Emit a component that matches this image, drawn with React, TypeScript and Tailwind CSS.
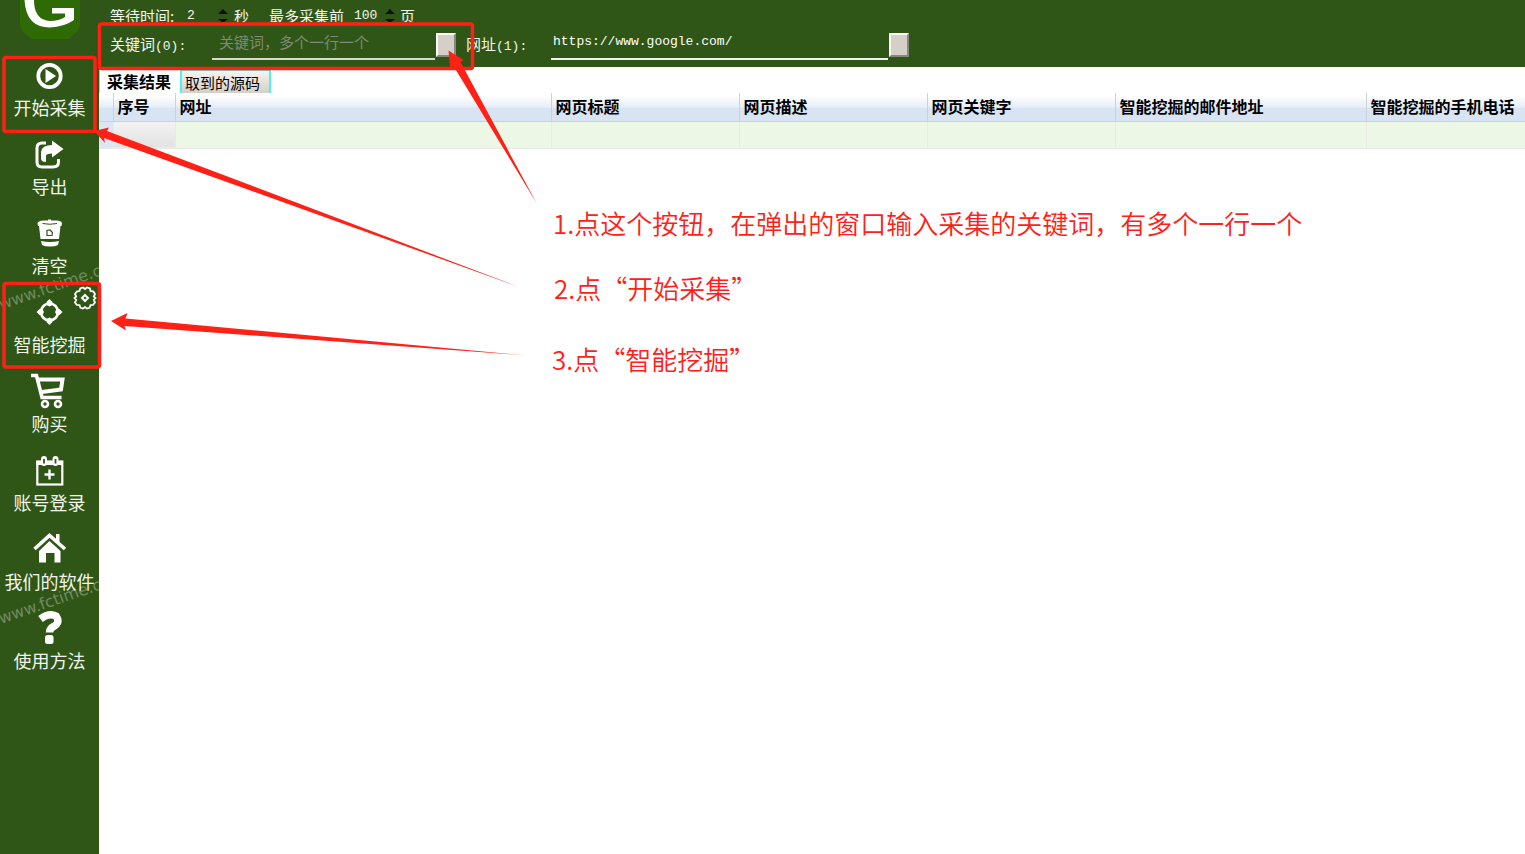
import React from "react";

type Item = { label: string; icon: React.ReactNode };

const navItems: Item[] = [
  {
    label: "开始采集",
    icon: (
      <>
        <circle cx="17.500" cy="19" r="11.200" fill="none" stroke="white" strokeWidth="3.800" />
        <path d="M13.500 12 L24 19 L13.500 26 Z" fill="white" />
      </>
    ),
  },
  {
    label: "导出",
    icon: (
      <>
        <path d="M14 7 H10 Q5 7 5 12 V26 Q5 31 10 31 H21 Q26.500 31 26.500 26 V23" fill="none" stroke="white" strokeWidth="3" />
        <path d="M20 4.500 L31.500 13 L20 21.500 V17.500 Q15 17.500 14 19.500 V26 Q9.500 26 9 23 V16 Q10 9 20 9 Z" fill="white" />
      </>
    ),
  },
  {
    label: "清空",
    icon: (
      <>
        <path d="M5.500 8 Q7 5.500 11 5.500 H16 V4.500 H19 V5.500 H25 Q29 5.500 30 8 L29.500 11 H28.500 L27 24 H8.500 L7 11 H6 Z" fill="white" />
        <path d="M10.500 8.500 Q18 10 25 8.500" fill="none" stroke="#2f5616" strokeWidth="1" />
        <path d="M9 26 Q18 28 27 26 L26 30 Q23 31.500 18 31.500 Q13 31.500 10 30 Z" fill="white" />
        <path d="M15 15.500 V20.500 H20 L20.500 17.500 L18 15 Z" fill="none" stroke="#2f5616" strokeWidth="1.200" />
      </>
    ),
  },
  {
    label: "智能挖掘",
    icon: (
      <>
        <circle cx="17.500" cy="18" r="8.500" fill="none" stroke="white" strokeWidth="2.600" />
        <path
          d="M17.500 5 L20.500 8 V11 L17.500 12.500 L14.500 11 V8 Z M17.500 31 L20.500 28 V25 L17.500 23.500 L14.500 25 V28 Z M4.500 18 L7.500 15 H10.500 L12 18 L10.500 21 H7.500 Z M30.500 18 L27.500 15 H24.500 L23 18 L24.500 21 H27.500 Z"
          fill="white"
        />
      </>
    ),
  },
  {
    label: "购买",
    icon: (
      <>
        <path d="M-1 2.500 H4.500 L10 24.500 H29.500" fill="none" stroke="white" strokeWidth="3.600" />
        <path d="M5 6.500 H30.500 L29 16.500 L10 19" fill="none" stroke="white" strokeWidth="4" />
        <circle cx="13" cy="31" r="3" fill="none" stroke="white" strokeWidth="2.600" />
        <circle cx="26" cy="31" r="3" fill="none" stroke="white" strokeWidth="2.600" />
      </>
    ),
  },
  {
    label: "账号登录",
    icon: (
      <>
        <rect x="5.300" y="9.500" width="25" height="23" fill="none" stroke="white" strokeWidth="2.200" />
        <path d="M4.500 9 H31 V13 H4.500 Z" fill="white" />
        <path d="M12 7 V11 M23.500 7 V11" stroke="white" strokeWidth="6" strokeLinecap="round" />
        <path d="M12 7 V11.500 M23.500 7 V11.500" stroke="#2f5616" strokeWidth="1.800" />
        <path d="M17.500 17.500 V27.500 M12.500 22.500 H22.500" stroke="white" strokeWidth="2.400" />
      </>
    ),
  },
  {
    label: "我们的软件",
    icon: (
      <>
        <path d="M2.500 18 L17.500 4.500 L33 18" fill="none" stroke="white" strokeWidth="3.600" />
        <path d="M24 3 H27.500 V13 L24 10 Z" fill="white" />
        <path d="M17.500 10 L28.500 20 V31.500 H22.500 V22 H14 V31.500 H7 V20 Z" fill="white" />
      </>
    ),
  },
  {
    label: "使用方法",
    icon: (
      <>
        <path d="M8.500 9 Q17 2.500 24 6 Q28.500 12 22.500 16 Q17.500 18 17.500 22.500" fill="none" stroke="white" strokeWidth="7.500" />
        <rect x="13" y="25" width="8.500" height="9" rx="2.500" fill="white" />
      </>
    ),
  },
];

const columns = [
  { title: "", width: "w-[14px]" },
  { title: "序号", width: "w-[62px]" },
  { title: "网址", width: "w-[376px]" },
  { title: "网页标题", width: "w-[188px]" },
  { title: "网页描述", width: "w-[188px]" },
  { title: "网页关键字", width: "w-[188px]" },
  { title: "智能挖掘的邮件地址", width: "w-[251px]" },
  { title: "智能挖掘的手机电话", width: "" },
];

function Logo() {
  return (
    <svg className="mx-auto block h-10 w-[60px]" viewBox="0 0 60 40" aria-label="G">
      <path d="M0 0 H60 V26 L57 32 L48 39 H12 L3 32 L0 26 Z" fill="#2f6b05" />
      <path d="M4.500 0 Q6 27.500 30 27.500 Q44 27 54 20 V8 H32 V13.500 H45 V17 Q39 21 30 21 Q14 20 14 0 Z" fill="white" />
    </svg>
  );
}

function Gear() {
  return (
    <svg viewBox="0 0 24 24" className="h-6 w-6" fill="none" stroke="white">
      <path
        d="M10 1.500 L12 3 L14 1.500 L17 2.500 L17.500 5 L20.500 5.500 L22 8 L20.800 10.500 L22.500 12 L20.800 14 L22 16.500 L20 19 L17.500 19.200 L16.500 21.800 L14 22.500 L12 21 L10 22.500 L7.500 21.800 L6.500 19.200 L3.800 19 L2 16.500 L3.200 14 L1.500 12 L3.200 10.500 L2 8 L3.800 5.500 L6.500 5 L7.200 2.500 Z"
        strokeWidth="1.800"
      />
      <path d="M12 9 L15 12 L12 15 L9 12 Z" strokeWidth="2" />
    </svg>
  );
}

function Sidebar() {
  return (
    <aside className="relative w-[99px] shrink-0 overflow-hidden bg-[#2f5616]">
      <div className="h-14">
        <Logo />
      </div>
      <nav>
        {navItems.map((item) => (
          <div key={item.label} className="relative h-[79px]">
            <button className="flex w-full flex-col items-center whitespace-nowrap pt-px text-[18px] leading-7 text-[#f1f5ec]">
              <svg viewBox="0 0 36 36" className="h-9 w-9 overflow-visible">
                {item.icon}
              </svg>
              <span>{item.label}</span>
            </button>
            {item.label === "智能挖掘" && (
              <button aria-label="设置" className="absolute right-[2px] top-[-7px]">
                <Gear />
              </button>
            )}
          </div>
        ))}
      </nav>
      <svg
        viewBox="0 0 99 400"
        className="pointer-events-none absolute left-0 top-[250px] h-[400px] w-[99px]"
        fill="white"
        fillOpacity="0.32"
        fontFamily="DejaVu Sans, sans-serif"
        fontSize="16"
      >
        <text transform="translate(1 60) rotate(-19)">www.fctime.c</text>
        <text transform="translate(1 374) rotate(-19)">www.fctime.c</text>
      </svg>
    </aside>
  );
}

function Spinner({ label, value, width }: { label: string; value: string; width: string }) {
  return (
    <span className="flex items-center">
      <input aria-label={label} defaultValue={value} className={"bg-transparent font-['Liberation_Mono',monospace] text-[13px] outline-none " + width} />
      <svg viewBox="0 0 10 14" className="h-[14px] w-[10px]" fill="#0b1206">
        <path d="M0 5 L5 0 L10 5 Z M0 10 H10 L5 14 Z" />
      </svg>
    </span>
  );
}

function PickButton({ label }: { label: string }) {
  return (
    <button
      aria-label={label}
      className="h-6 w-5 border-2 border-b-[#8a877f] border-l-[#fbfaf7] border-r-[#8a877f] border-t-[#fbfaf7] bg-[#d4d0c8]"
    />
  );
}

function Toolbar() {
  return (
    <header className="h-[67px] bg-[#2f5616] text-[15px] text-[#f4f7f0]">
      <div className="flex h-[22px] items-start overflow-hidden pl-[11px]">
        <div className="flex h-8 items-center leading-8">
          <span className="w-[77px]">等待时间:</span>
          <Spinner label="等待时间" value="2" width="w-[31px]" />
          <span className="w-[41px] pl-[6px]">秒</span>
          <span className="w-[85px]">最多采集前</span>
          <Spinner label="最多采集页数" value="100" width="w-[31px]" />
          <span className="pl-[5px]">页</span>
        </div>
      </div>
      <div className="flex h-[45px] items-center pl-[11px]">
        <label htmlFor="keywords" className="w-[102px]">
          关键词<span className="font-['Liberation_Mono',monospace] text-[13px]">(0):</span>
        </label>
        <input
          id="keywords"
          placeholder="关键词，多个一行一个"
          className="h-[30px] w-[223px] border-b-2 border-[#d5dccf] bg-transparent pl-[7px] pb-1 outline-none placeholder:text-[#7f8a78]"
        />
        <span className="w-px" />
        <PickButton label="编辑关键词" />
        <label htmlFor="url" className="w-[95px] pl-[10px]">
          网址<span className="font-['Liberation_Mono',monospace] text-[13px]">(1):</span>
        </label>
        <input
          id="url"
          defaultValue="https://www.google.com/"
          className="h-[30px] w-[337px] border-b-2 border-[#f0f3ed] bg-transparent pl-[2px] pb-1 font-['Liberation_Mono',monospace] text-[13px] text-white outline-none"
        />
        <span className="w-px" />
        <PickButton label="编辑网址" />
      </div>
    </header>
  );
}

function Tabs() {
  return (
    <div role="tablist" className="flex h-[26px] items-end border-l border-[#4ff0f0] text-black">
      <button role="tab" aria-selected="true" className="h-6 w-20 pl-[7px] text-left text-base leading-6 font-bold">
        采集结果
      </button>
      <button
        role="tab"
        aria-selected="false"
        className="h-[23px] w-[91px] whitespace-nowrap border-x-2 border-t border-[#4ff0f0] bg-linear-to-b from-[#f6f4f1] to-[#d4d0c8] pl-[3px] text-left text-[15px] leading-[21px]"
      >
        取到的源码
      </button>
    </div>
  );
}

function ResultTable() {
  return (
    <table className="w-full table-fixed border-collapse text-base text-black">
      <thead>
        <tr className="h-[28px] bg-linear-to-b from-white from-10% via-[#e6eef8] via-50% to-[#d8e4f3] to-55%">
          {columns.map((c, i) => (
            <th key={i} className={"overflow-hidden whitespace-nowrap border-b border-l border-[#cdd0d4] p-0 pb-[2px] pl-1 text-left leading-6 first:border-l-0 " + c.width}>
              {c.title}
            </th>
          ))}
        </tr>
      </thead>
      <tbody>
        <tr className="h-[27px]">
          {columns.map((c, i) => (
            <td
              key={i}
              className={
                "border-b border-l border-[#ebe9e8] p-0 first:border-l-0 " +
                (i === 0 ? "bg-[#dce7f5]" : i === 1 ? "bg-linear-to-b from-[#f3f3f3] to-[#e2e2e2]" : "bg-[#ecf7e5]")
              }
            />
          ))}
        </tr>
      </tbody>
    </table>
  );
}

function Annotations() {
  return (
    <div className="pointer-events-none absolute inset-0 overflow-hidden font-[350] whitespace-nowrap text-[#ff2116]">
      <svg className="absolute left-0 top-0 h-[400px] w-[560px]" viewBox="0 0 560 400" fill="#ff2116">
        <g fill="none" stroke="#ff2116" strokeWidth="3.500">
          <rect x="99.500" y="24" width="373" height="44.500" rx="2" />
          <rect x="4" y="57.500" width="91" height="74" rx="2" />
          <rect x="4" y="283.500" width="95.500" height="83.500" rx="2" />
        </g>
        <path d="M448.500 50.500 L463.500 60 L460.500 62 L536.500 203 L453.500 66 L450 67.500 Z" />
        <path d="M94 131 L109 127.500 L107 131 L518 286.500 L104 138 L105 143 Z" />
        <path d="M111 321 L127.500 313 L125.500 318.500 L527 355.500 L124.500 326 L126 330.500 Z" />
      </svg>
      <p className="absolute left-[553px] top-[203px] text-[26px] leading-10">1.点这个按钮，在弹出的窗口输入采集的关键词，有多个一行一个</p>
      <p className="absolute left-[554px] top-[268px] text-[26px] leading-10">2.点“开始采集”</p>
      <p className="absolute left-[552px] top-[339px] text-[26px] leading-10">3.点“智能挖掘”</p>
    </div>
  );
}

export default function App() {
  return (
    <div lang="zh-CN" className="relative flex min-h-screen bg-white font-['Noto_Sans_CJK_SC',sans-serif]">
      <Sidebar />
      <main className="min-w-0 flex-1 overflow-hidden">
        <Toolbar />
        <Tabs />
        <ResultTable />
      </main>
      <Annotations />
    </div>
  );
}
